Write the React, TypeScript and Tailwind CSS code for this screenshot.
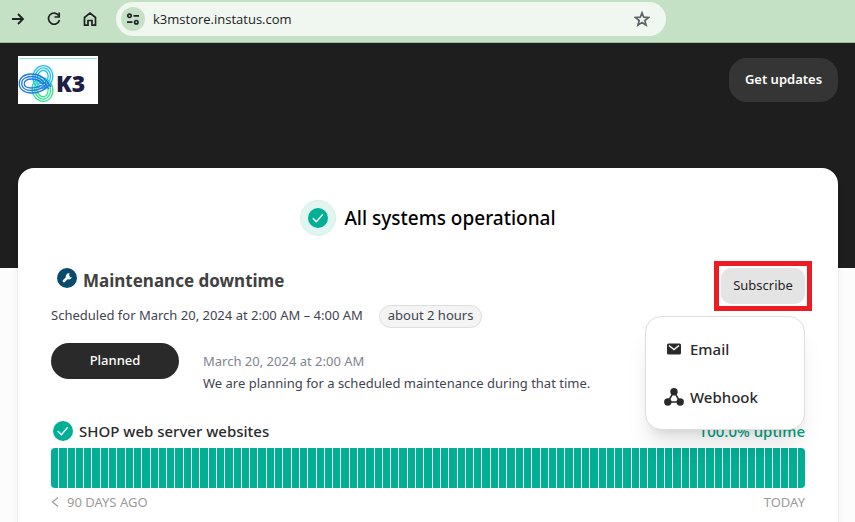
import React from "react";

const DAYS = Array.from({ length: 91 }, (_, i) => i);

function CheckBadge() {
  return (
    <svg viewBox="0 0 20 20" className="size-5 shrink-0" aria-hidden="true">
      <circle cx="10" cy="10" r="10" fill="#00af94" />
      <path d="M5.2 10.5l3.2 3.3 6-7.2" fill="none" stroke="#fff" strokeWidth="1.4" strokeLinecap="round" strokeLinejoin="round" />
    </svg>
  );
}

function WrenchBadge() {
  return (
    <svg viewBox="0 0 20 20" className="size-5 shrink-0" aria-hidden="true">
      <circle cx="10" cy="10" r="10" fill="#084b6c" />
      <path d="M7 13l4.6-4.6" stroke="#fff" strokeWidth="2.6" strokeLinecap="round" />
      <path d="M12.9 5.5a3 3 0 1 0 1.9 3.4l-2.2.5-1.5-1.4z" fill="#fff" />
    </svg>
  );
}

function K3Logo() {
  return (
    <svg viewBox="0 0 80 48" className="h-12 w-20" role="img" aria-label="K3">
      <rect width="80" height="48" fill="#fff" />
      <path d="M1 2.5h78" stroke="#86ebc3" />
      <g fill="none" strokeWidth="1.3">
        <g stroke="#28e58b">
          <ellipse cx="24.500" cy="33.500" rx="10.300" ry="12" transform="rotate(-12 24.500 33.500)" />
          <ellipse cx="24.500" cy="33.500" rx="7.900" ry="9.600" transform="rotate(-12 24.500 33.500)" />
          <ellipse cx="24.500" cy="33.500" rx="5.500" ry="7.200" transform="rotate(-12 24.500 33.500)" />
        </g>
        <g stroke="#20bfe9">
          <ellipse cx="24.800" cy="21" rx="10" ry="11.500" transform="rotate(14 24.800 21)" />
          <ellipse cx="24.800" cy="21" rx="7.600" ry="9.100" transform="rotate(14 24.800 21)" />
          <ellipse cx="24.800" cy="21" rx="5.200" ry="6.700" transform="rotate(14 24.800 21)" />
        </g>
        <g stroke="#2178e8">
          <path d="M33 31C29 24 22 18 13 18 6 18 1.200 22 1.200 27.500S6 37 13.500 37C22 37 28 33 32 28" />
          <path d="M31 33C27 26 21 20.500 14 20.500c-6 0-10.300 2.500-10.300 7s4.300 7 9.800 7c7 0 12-2.500 16.500-7.500" />
          <path d="M28 33c-2-5-7-10-14-10-4.500 0-7.800 1.500-7.800 4.500S9.500 32 13.500 32c6 0 10-2 14.500-6" />
        </g>
      </g>
      <text x="38" y="36" fontFamily="Noto Sans, sans-serif" fontWeight="900" fontSize="23" fill="#211c43">K3</text>
    </svg>
  );
}

function BrowserBar() {
  return (
    <div className="flex h-[43px] items-start border-b border-[#9fbc9f] bg-[#c5e1c5] pt-0.5 pl-1.5 text-[#202124]">
      <div className="flex h-[34px] shrink-0 items-center gap-3">
        <button aria-label="Forward" className="grid size-6 place-items-center">
          <svg viewBox="0 0 16 16" className="size-4" fill="none" stroke="currentColor" strokeWidth="1.8"><path d="M2 8h11M8 3l5 5-5 5" /></svg>
        </button>
        <button aria-label="Reload" className="grid size-6 place-items-center">
          <svg viewBox="0 0 16 16" className="size-4" fill="none" stroke="currentColor" strokeWidth="1.700"><path d="M12.800 4.600A5.600 5.600 0 1 0 13.500 9" /><path d="M13.200 1.500v4.500H8.500" /></svg>
        </button>
        <button aria-label="Home" className="grid size-6 place-items-center">
          <svg viewBox="0 0 16 16" className="size-4" fill="none" stroke="currentColor" strokeWidth="1.700"><path d="M2.500 6.500L8 2l5.500 4.500v7.700H10V9.500H6v4.700H2.500z" /></svg>
        </button>
      </div>
      <div className="ml-3.5 flex h-[34px] w-[64.8%] items-center rounded-full bg-[#f0f7f0] pr-3 pl-[5px]">
        <button aria-label="Site information" className="grid size-6 shrink-0 place-items-center rounded-full bg-[#c5e1c5]">
          <svg viewBox="0 0 14 14" className="size-3.5" fill="none" stroke="currentColor" strokeWidth="1.700"><circle cx="3.500" cy="3.800" r="1.700" /><path d="M7.500 3.800H13M1 10.200h5.500" /><circle cx="10.300" cy="10.200" r="1.700" /></svg>
        </button>
        <input aria-label="Address" readOnly value="k3mstore.instatus.com" className="ml-2 min-w-0 flex-1 bg-transparent font-['Open_Sans',sans-serif] text-[13px] leading-5 outline-none" />
        <button aria-label="Bookmark" className="grid size-6 place-items-center text-[#5f6368]">
          <svg viewBox="0 0 16 16" className="size-4" fill="none" stroke="currentColor" strokeWidth="1.700"><path d="M8 1.800l1.700 4.400 4.800.3-3.700 3 1.300 4.600L8 11.500l-4.100 2.600 1.300-4.600-3.700-3 4.800-.3z" /></svg>
        </button>
      </div>
    </div>
  );
}

function SubscribeMenu() {
  return (
    <div className="absolute top-12 right-0 z-10 flex w-40 flex-col rounded-2xl border border-[#dedede] bg-white py-2 text-[15px] font-medium text-[#2a2a2a] shadow-xl">
      <button className="flex h-12 items-center gap-1.5 pl-[18px]">
        <svg viewBox="0 0 20 20" className="size-5" aria-hidden="true"><rect x="3" y="4.500" width="14" height="11" rx="1.500" fill="currentColor" /><path d="M5 6.500l5 4 5-4" fill="none" stroke="#fff" strokeWidth="1.400" /></svg>
        Email
      </button>
      <button className="flex h-12 items-center gap-1.5 pl-[18px]">
        <svg viewBox="0 0 20 20" className="size-5" aria-hidden="true"><path d="M10 4.500L3.800 15h12.400z" fill="none" stroke="currentColor" strokeWidth="1.500" /><g fill="currentColor"><circle cx="10" cy="4.700" r="3.700" /><circle cx="3.800" cy="15" r="3.700" /><circle cx="16.200" cy="15" r="3.700" /></g></svg>
        Webhook
      </button>
    </div>
  );
}

export default function App() {
  return (
    <div className="min-h-screen overflow-hidden bg-[#fcfcfc] font-['Noto_Sans',sans-serif] text-[#3f4453]">
      <BrowserBar />
      <header className="flex h-[225px] items-start justify-between bg-[#1e1e1e] pt-[13px] pr-[17px] pl-[18px]">
        <a href="#home"><K3Logo /></a>
        <button className="mt-0.5 h-11 w-[109px] rounded-[18px] bg-[#353535] text-[13px] font-semibold text-white">Get updates</button>
      </header>
      <main className="relative mr-[17px] ml-[18px] -mt-[100px] rounded-t-2xl bg-white px-[33px] pt-8 pb-4 shadow-md">
        <h1 className="flex h-9 items-center justify-center gap-2 text-[19px] font-medium text-black">
          <span className="grid size-9 place-items-center rounded-full border border-[#d6f0ea] bg-[#e1f5f1]"><CheckBadge /></span>
          All systems operational
        </h1>

        <section className="pt-8">
          <div className="flex items-start justify-between">
            <h2 className="flex gap-1.5 pl-1.5 text-[17px] leading-[26px] font-bold text-[#414141]">
              <WrenchBadge />Maintenance downtime
            </h2>
            <div className="relative">
              <button className="h-9 w-[84px] rounded-[10px] bg-[#e4e4e4] text-[13px] text-[#252525]">Subscribe</button>
              <span className="pointer-events-none absolute -inset-[7px] border-[5px] border-[#ed1c24]" />
              <SubscribeMenu />
            </div>
          </div>
          <div className="flex h-6 items-center gap-4 text-[13px]">
            <p>Scheduled for March 20, 2024 at 2:00 AM – 4:00 AM</p>
            <span className="flex h-[23px] items-center rounded-full border border-[#dedede] bg-[#f4f4f4] px-2">about 2 hours</span>
          </div>
          <div className="mt-[15px] flex gap-6 text-[13px]">
            <span className="flex h-9 w-32 items-center justify-center rounded-full bg-[#2a2a2a] font-medium text-white">Planned</span>
            <div className="pt-[7px] leading-[22px]">
              <p className="text-[#80848f]">March 20, 2024 at 2:00 AM</p>
              <p>We are planning for a scheduled maintenance during that time.</p>
            </div>
          </div>
        </section>

        <section className="pt-[25px]">
          <div className="flex h-6 items-center justify-between text-[15px] font-medium">
            <h3 className="flex items-center gap-1.5 pl-0.5 text-[#2a2a2a]"><CheckBadge />SHOP web server websites</h3>
            <span className="text-[#009f83]">100.0% uptime</span>
          </div>
          <div role="img" aria-label="Uptime for the last 90 days" className="mt-[5px] flex h-10 gap-px overflow-hidden rounded">
            {DAYS.map((day) => <span key={day} className="flex-1 bg-[#00af94]" />)}
          </div>
          <div className="mt-1 flex items-center justify-between text-[13px] leading-5 text-[#9b9b9b]">
            <span className="flex items-center gap-2">
              <svg viewBox="0 0 8 12" className="h-3 w-2" fill="none" stroke="currentColor" strokeWidth="1.200" aria-hidden="true"><path d="M7 1.500L1.500 6 7 10.500" /></svg>
              90 DAYS AGO
            </span>
            <span>TODAY</span>
          </div>
        </section>
      </main>
    </div>
  );
}
